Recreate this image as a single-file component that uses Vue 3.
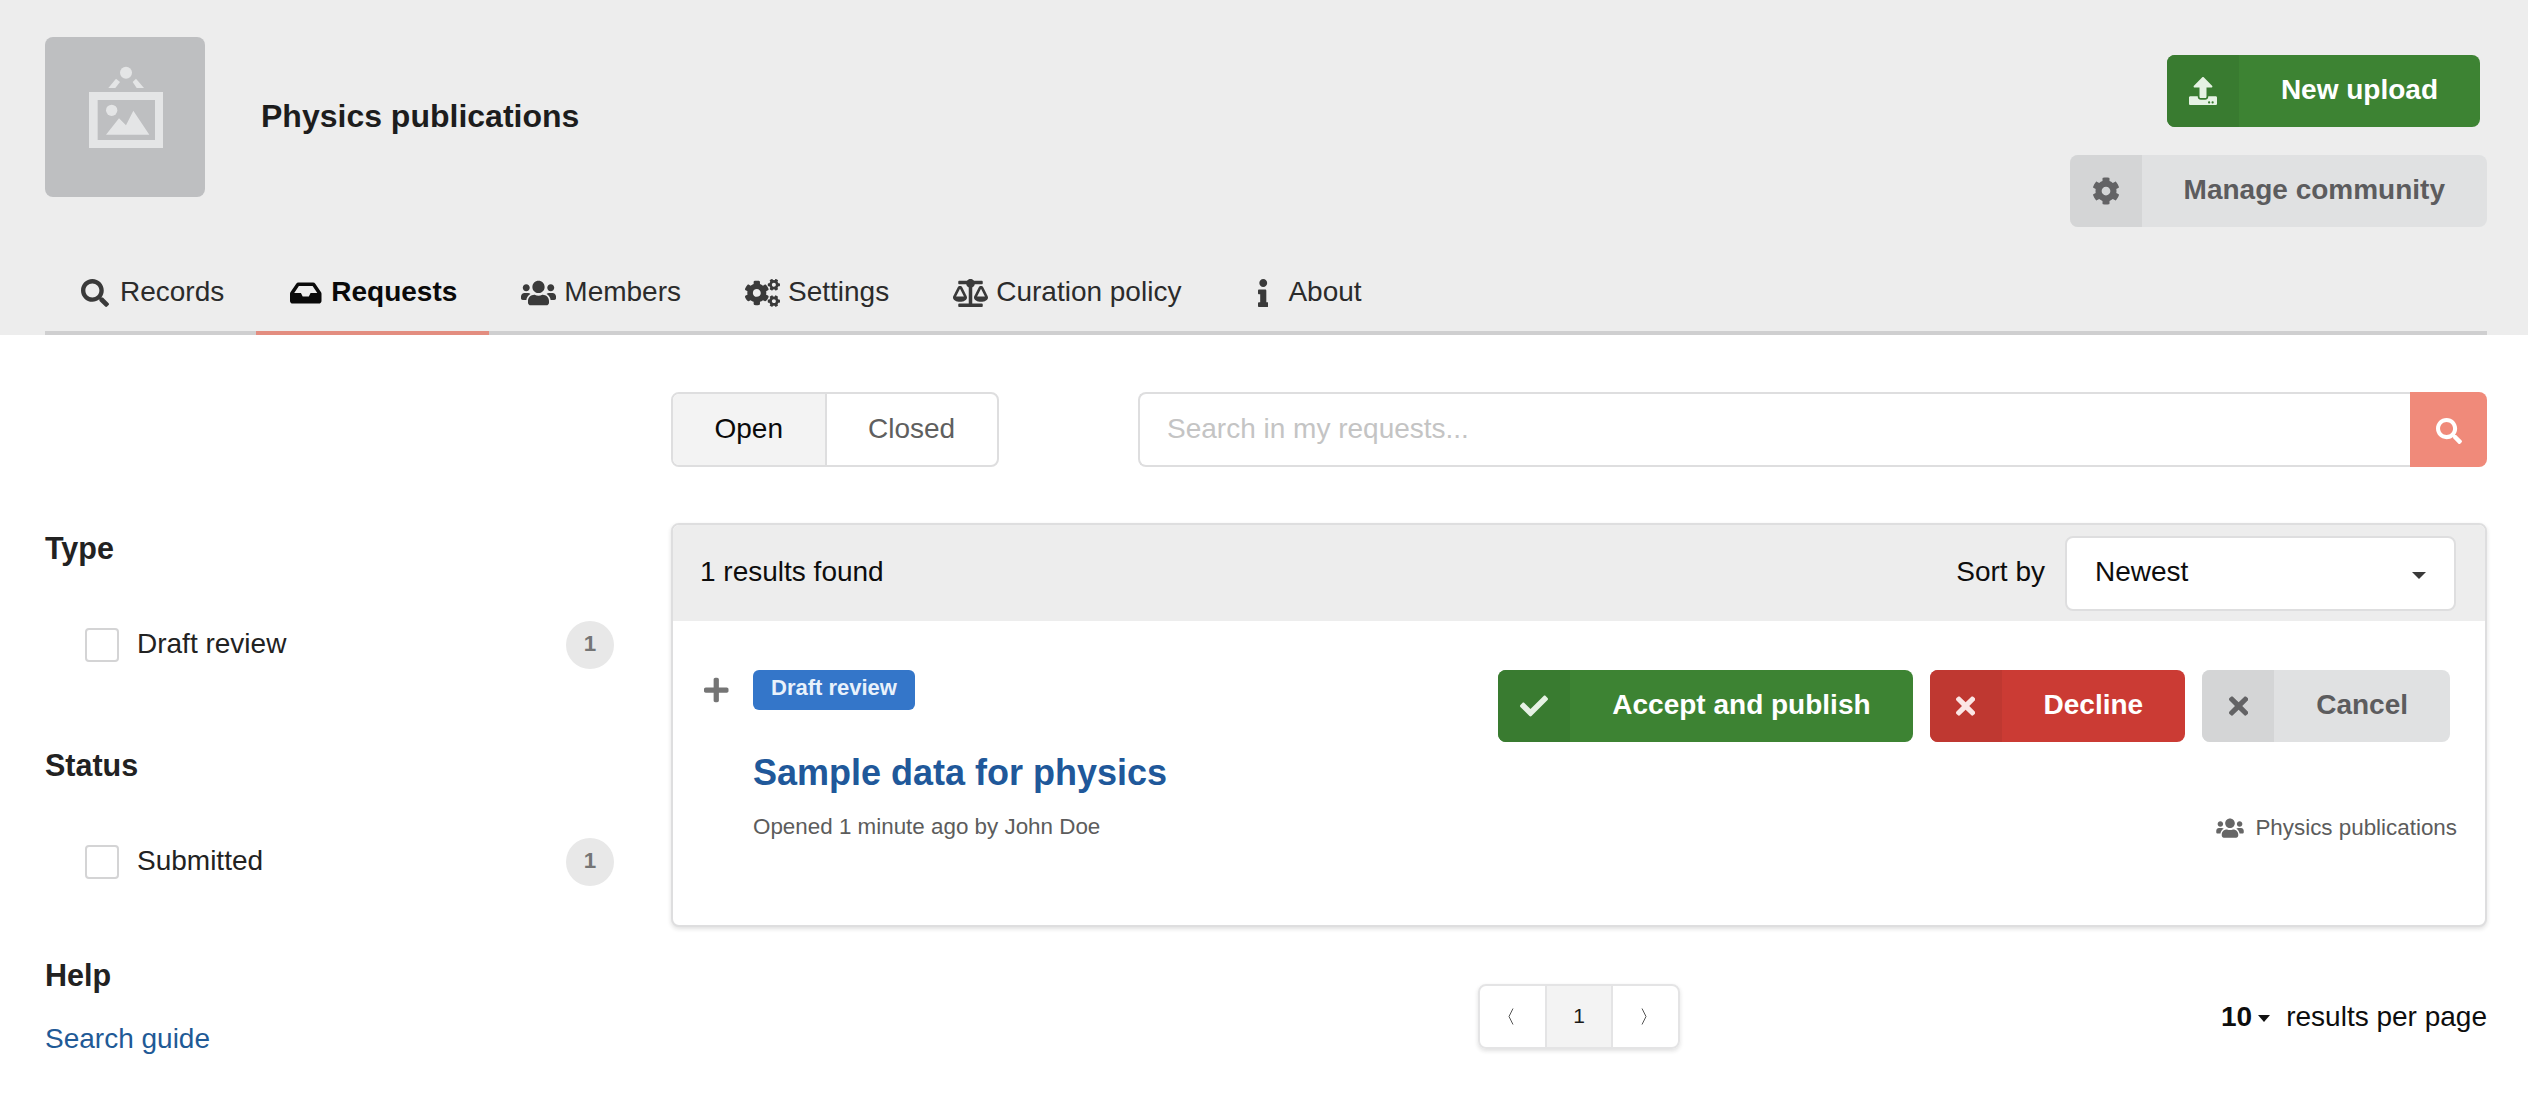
<script setup>
const P = {
  search: 'M505 442.7L405.3 343c-4.5-4.5-10.6-7-17-7H372c27.6-35.3 44-79.7 44-128C416 93.1 322.9 0 208 0S0 93.1 0 208s93.1 208 208 208c48.3 0 92.7-16.4 128-44v16.3c0 6.4 2.5 12.5 7 17l99.7 99.7c9.4 9.4 24.6 9.4 33.9 0l28.3-28.3c9.4-9.4 9.4-24.6.1-34zM208 336c-70.7 0-128-57.2-128-128 0-70.7 57.2-128 128-128 70.7 0 128 57.2 128 128 0 70.7-57.2 128-128 128z',
  inbox: 'M567.938 243.908L462.25 85.374A48.003 48.003 0 0 0 422.311 64H153.689a48 48 0 0 0-39.938 21.374L8.062 243.908A47.994 47.994 0 0 0 0 270.533V400c0 26.51 21.49 48 48 48h480c26.51 0 48-21.49 48-48V270.533a47.994 47.994 0 0 0-8.062-26.625zM162.252 128h251.497l85.333 128H376l-32 64H232l-32-64H76.918l85.334-128z',
  users: 'M96 224c35.3 0 64-28.7 64-64s-28.7-64-64-64-64 28.7-64 64 28.7 64 64 64zm448 0c35.3 0 64-28.7 64-64s-28.7-64-64-64-64 28.7-64 64 28.7 64 64 64zm32 32h-64c-17.6 0-33.5 7.1-45.1 18.6 40.3 22.1 68.9 62 75.1 109.4h66c17.7 0 32-14.3 32-32v-32c0-35.3-28.7-64-64-64zm-256 0c61.9 0 112-50.1 112-112S381.9 32 320 32 208 82.1 208 144s50.1 112 112 112zm76.8 32h-8.3c-20.8 10-43.9 16-68.5 16s-47.6-6-68.5-16h-8.3C179.6 288 128 339.6 128 403.2V432c0 26.5 21.5 48 48 48h288c26.5 0 48-21.5 48-48v-28.8c0-63.6-51.6-115.2-115.2-115.2zm-223.7-13.4C161.5 263.1 145.6 256 128 256H64c-35.3 0-64 28.7-64 64v32c0 17.7 14.3 32 32 32h65.9c6.3-47.4 34.9-87.3 75.2-109.4z',
  cogs: 'M512.1 191l-8.2 14.3c-3 5.3-9.4 7.5-15.1 5.4-11.8-4.4-22.6-10.7-32.1-18.6-4.6-3.8-5.8-10.5-2.8-15.7l8.2-14.3c-6.9-8-12.3-17.3-15.9-27.4h-16.5c-6 0-11.2-4.3-12.2-10.3-2-12-2.1-24.6 0-37.1 1-6 6.2-10.4 12.2-10.4h16.5c3.6-10.1 9-19.4 15.9-27.4l-8.2-14.3c-3-5.2-1.9-11.9 2.8-15.7 9.5-7.9 20.4-14.2 32.1-18.6 5.7-2.1 12.1.1 15.1 5.4l8.2 14.3c10.5-1.9 21.2-1.9 31.7 0L552 6.3c3-5.3 9.4-7.5 15.1-5.4 11.8 4.4 22.6 10.7 32.1 18.6 4.6 3.8 5.8 10.5 2.8 15.7l-8.2 14.3c6.9 8 12.3 17.3 15.9 27.4h16.5c6 0 11.2 4.3 12.2 10.3 2 12 2.1 24.6 0 37.1-1 6-6.2 10.4-12.2 10.4h-16.5c-3.6 10.1-9 19.4-15.9 27.4l8.2 14.3c3 5.2 1.9 11.9-2.8 15.7-9.5 7.9-20.4 14.2-32.1 18.6-5.7 2.1-12.1-.1-15.1-5.4l-8.2-14.3c-10.4 1.9-21.2 1.9-31.7 0zm-10.5-58.8c38.5 29.6 82.4-14.3 52.8-52.8-38.5-29.7-82.4 14.3-52.8 52.8zM386.3 286.1l33.7 16.8c10.1 5.8 14.5 18.1 10.5 29.1-8.9 24.2-26.4 46.4-42.6 65.8-7.4 8.9-20.2 11.1-30.3 5.3l-29.1-16.8c-16 13.7-34.6 24.6-54.9 31.7v33.6c0 11.6-8.3 21.6-19.7 23.6-24.6 4.2-50.4 4.4-75.9 0-11.5-2-20-11.9-20-23.6V418c-20.3-7.2-38.9-18-54.9-31.7L74 403c-10 5.8-22.9 3.6-30.3-5.3-16.2-19.4-33.3-41.6-42.2-65.7-4-10.9.4-23.2 10.5-29.1l33.3-16.8c-3.9-20.9-3.9-42.4 0-63.4L12 205.8c-10.1-5.8-14.6-18.1-10.5-29 8.9-24.2 26-46.4 42.2-65.8 7.4-8.9 20.2-11.1 30.3-5.3l29.1 16.8c16-13.7 34.6-24.6 54.9-31.7V57.1c0-11.5 8.2-21.5 19.6-23.5 24.6-4.2 50.5-4.4 76-.1 11.5 2 20 11.9 20 23.6v33.6c20.3 7.2 38.9 18 54.9 31.7l29.1-16.8c10-5.8 22.9-3.6 30.3 5.3 16.2 19.4 33.2 41.6 42.1 65.8 4 10.9.1 23.2-10 29.1l-33.7 16.8c3.9 21 3.9 42.5 0 63.5zm-117.6 21.1c59.2-77-28.7-164.9-105.7-105.7-59.2 77 28.7 164.9 105.7 105.7zm243.4 182.7l-8.2 14.3c-3 5.3-9.4 7.5-15.1 5.4-11.8-4.4-22.6-10.7-32.1-18.6-4.6-3.8-5.8-10.5-2.8-15.7l8.2-14.3c-6.9-8-12.3-17.3-15.9-27.4h-16.5c-6 0-11.2-4.3-12.2-10.3-2-12-2.1-24.6 0-37.1 1-6 6.2-10.4 12.2-10.4h16.5c3.6-10.1 9-19.4 15.9-27.4l-8.2-14.3c-3-5.2-1.9-11.9 2.8-15.7 9.5-7.9 20.4-14.2 32.1-18.6 5.7-2.1 12.1.1 15.1 5.4l8.2 14.3c10.5-1.9 21.2-1.9 31.7 0l8.2-14.3c3-5.3 9.4-7.5 15.1-5.4 11.8 4.4 22.6 10.7 32.1 18.6 4.6 3.8 5.8 10.5 2.8 15.7l-8.2 14.3c6.9 8 12.3 17.3 15.9 27.4h16.5c6 0 11.2 4.3 12.2 10.3 2 12 2.1 24.6 0 37.1-1 6-6.2 10.4-12.2 10.4h-16.5c-3.6 10.1-9 19.4-15.9 27.4l8.2 14.3c3 5.2 1.9 11.9-2.8 15.7-9.5 7.9-20.4 14.2-32.1 18.6-5.7 2.1-12.1-.1-15.1-5.4l-8.2-14.3c-10.4 1.9-21.2 1.9-31.7 0zM501.6 431c38.5 29.6 82.4-14.3 52.8-52.8-38.5-29.6-82.4 14.3-52.8 52.8z',
  cog: 'M487.4 315.7l-42.6-24.6c4.3-23.2 4.3-47 0-70.2l42.6-24.6c4.9-2.8 7.1-8.6 5.5-14-11.1-35.6-30-67.8-54.7-94.6-3.8-4.1-10-5.1-14.8-2.3L380.8 110c-17.9-15.4-38.5-27.3-60.8-35.1V25.8c0-5.6-3.9-10.5-9.4-11.7-36.7-8.2-74.3-7.8-109.2 0-5.5 1.2-9.4 6.1-9.4 11.7V75c-22.2 7.9-42.8 19.8-60.8 35.1L88.7 85.5c-4.9-2.8-11-1.9-14.8 2.3-24.7 26.7-43.6 58.9-54.7 94.6-1.7 5.4.6 11.2 5.5 14L67.3 221c-4.3 23.2-4.3 47 0 70.2l-42.6 24.6c-4.9 2.8-7.1 8.6-5.5 14 11.1 35.6 30 67.8 54.7 94.6 3.8 4.1 10 5.1 14.8 2.3l42.6-24.6c17.9 15.4 38.5 27.3 60.8 35.1v49.2c0 5.6 3.9 10.5 9.4 11.7 36.7 8.2 74.3 7.8 109.2 0 5.5-1.2 9.4-6.1 9.4-11.7v-49.2c22.2-7.9 42.8-19.8 60.8-35.1l42.6 24.6c4.9 2.8 11 1.9 14.8-2.3 24.7-26.7 43.6-58.9 54.7-94.6 1.5-5.5-.7-11.3-5.6-14.1zM256 336c-44.1 0-80-35.9-80-80s35.9-80 80-80 80 35.9 80 80-35.9 80-80 80z',
  scale: 'M256 336h-.02c0-16.18 1.34-8.73-85.05-181.51-17.65-35.29-68.19-35.36-85.87 0C-2.06 328.75.02 320.33.02 336H0c0 44.18 57.31 80 128 80s128-35.82 128-80zM128 176l72 144H56l72-144zm511.98 160c0-16.18 1.34-8.73-85.05-181.51-17.65-35.29-68.19-35.36-85.87 0-87.12 174.26-85.04 165.84-85.04 181.51H384c0 44.18 57.31 80 128 80s128-35.82 128-80h-.02zM440 320l72-144 72 144H440zm88 128H352V153.25c23.51-10.29 41.16-31.48 46.39-57.25H528c8.84 0 16-7.16 16-16V48c0-8.84-7.16-16-16-16H383.64C369.04 12.68 346.09 0 320 0s-49.04 12.68-63.64 32H112c-8.84 0-16 7.16-16 16v32c0 8.84 7.16 16 16 16h129.61c5.23 25.76 22.87 46.96 46.39 57.25V448H112c-8.84 0-16 7.16-16 16v32c0 8.84 7.16 16 16 16h416c8.84 0 16-7.16 16-16v-32c0-8.84-7.16-16-16-16z',
  info: 'M20 424.229h20V279.771H20c-11.046 0-20-8.954-20-20V212c0-11.046 8.954-20 20-20h112c11.046 0 20 8.954 20 20v212.229h20c11.046 0 20 8.954 20 20V492c0 11.046-8.954 20-20 20H20c-11.046 0-20-8.954-20-20v-47.771c0-11.046 8.954-20 20-20zM96 0C56.235 0 24 32.235 24 72s32.235 72 72 72 72-32.235 72-72S135.764 0 96 0z',
  check: 'M173.898 439.404l-166.4-166.4c-9.997-9.997-9.997-26.206 0-36.204l36.203-36.204c9.997-10.998 26.207-9.998 36.204 0L192 312.69 432.095 72.596c9.997-9.997 26.207-9.997 36.204 0l36.203 36.204c9.997 9.997 9.997 26.206 0 36.204l-294.4 294.401c-9.998 9.997-26.207 9.997-36.204-.001z',
  times: 'M242.72 256l100.07-100.07c12.28-12.28 12.28-32.19 0-44.48l-22.24-22.24c-12.28-12.28-32.19-12.28-44.48 0L176 189.28 75.93 89.21c-12.28-12.28-32.19-12.28-44.48 0L9.21 111.45c-12.28 12.28-12.28 32.19 0 44.48L109.28 256 9.21 356.07c-12.28 12.28-12.28 32.19 0 44.48l22.24 22.24c12.28 12.28 32.2 12.28 44.48 0L176 322.72l100.07 100.07c12.28 12.28 32.2 12.28 44.48 0l22.24-22.24c12.28-12.28 12.28-32.19 0-44.48L242.72 256z',
  plus: 'M416 208H272V64c0-17.67-14.33-32-32-32h-32c-17.67 0-32 14.33-32 32v144H32c-17.67 0-32 14.33-32 32v32c0 17.67 14.33 32 32 32h144v144c0 17.67 14.33 32 32 32h32c17.67 0 32-14.33 32-32V304h144c17.67 0 32-14.33 32-32v-32c0-17.67-14.33-32-32-32z',
  upload: 'M296 384h-80c-13.3 0-24-10.7-24-24V192h-87.7c-17.8 0-26.7-21.5-14.1-34.1L242.3 5.7c7.5-7.5 19.8-7.5 27.3 0l152.2 152.2c12.6 12.6 3.7 34.1-14.1 34.1H320v168c0 13.3-10.7 24-24 24zm216-8v112c0 13.3-10.7 24-24 24H24c-13.3 0-24-10.7-24-24V376c0-13.3 10.7-24 24-24h136v8c0 30.9 25.1 56 56 56h80c30.9 0 56-25.1 56-56v-8h136c13.3 0 24 10.7 24 24zm-124 88c0-11-9-20-20-20s-20 9-20 20 9 20 20 20 20-9 20-20zm64 0c0-11-9-20-20-20s-20 9-20 20 9 20 20 20 20-9 20-20z'
}
const tabs = [
  { label: 'Records', d: P.search, w: 512 },
  { label: 'Requests', d: P.inbox, w: 576, active: true },
  { label: 'Members', d: P.users, w: 640 },
  { label: 'Settings', d: P.cogs, w: 640 },
  { label: 'Curation policy', d: P.scale, w: 640 },
  { label: 'About', d: P.info, w: 192 }
]
const facets = [
  { title: 'Type', item: 'Draft review' },
  { title: 'Status', item: 'Submitted' }
]
const actions = [
  { label: 'Accept and publish', d: P.check, w: 512, cls: 'green' },
  { label: 'Decline', d: P.times, w: 352, cls: 'red' },
  { label: 'Cancel', d: P.times, w: 352, cls: 'grey' }
]
</script>

<template>
  <div class="page">
    <header class="hdr">
      <div class="hdr-top">
        <div class="brand">
          <div class="avatar">
            <svg viewBox="45 51 480 480" width="160" height="160">
              <circle cx="288" cy="158" r="18" fill="#e4e5e6" />
              <polygon points="235,204 258,176 270,186 256,204" fill="#e4e5e6" />
              <polygon points="308,186 318,176 342,204 320,204" fill="#e4e5e6" />
              <path fill="#e4e5e6" fill-rule="evenodd" d="M177 216H399V384H177ZM203 240V360H375V240Z" />
              <circle cx="245" cy="271" r="17" fill="#e4e5e6" />
              <polygon points="228,344 267,295 288,316 310,272 358,344" fill="#e4e5e6" />
            </svg>
          </div>
          <h1 class="name">Physics publications</h1>
        </div>
        <div class="hdr-actions">
          <button class="btn green upload-btn">
            <span class="btn-ico"><svg viewBox="0 0 512 512" class="i28"><path :d="P.upload" /></svg></span>
            <span class="btn-txt">New upload</span>
          </button>
          <button class="btn grey">
            <span class="btn-ico"><svg viewBox="0 0 512 512" class="i28"><path :d="P.cog" /></svg></span>
            <span class="btn-txt">Manage community</span>
          </button>
        </div>
      </div>
      <nav class="tabs">
        <a v-for="t in tabs" :key="t.label" class="tab" :class="{ active: t.active }">
          <span class="tab-ico"><svg :viewBox="`0 0 ${t.w} 512`" class="i28"><path :d="t.d" /></svg></span>
          <span class="tab-txt">{{ t.label }}</span>
        </a>
      </nav>
    </header>

    <div class="content">
      <aside class="side">
        <section v-for="f in facets" :key="f.title" class="facet">
          <h2 class="side-h">{{ f.title }}</h2>
          <div class="facet-row">
            <span class="cb"></span>
            <span class="facet-label">{{ f.item }}</span>
            <span class="count">1</span>
          </div>
        </section>
        <section class="help">
          <h2 class="side-h">Help</h2>
          <a class="guide">Search guide</a>
        </section>
      </aside>

      <main class="main">
        <div class="filters">
          <div class="toggle">
            <span class="tg on">Open</span>
            <span class="tg">Closed</span>
          </div>
          <div class="searchbox">
            <input class="search-input" placeholder="Search in my requests..." />
            <span class="search-btn"><svg viewBox="0 0 512 512" class="i26"><path :d="P.search" /></svg></span>
          </div>
        </div>

        <div class="card">
          <div class="card-head">
            <span>1 results found</span>
            <div class="sort">
              <span>Sort by</span>
              <div class="dropdown">
                <span>Newest</span>
                <i class="caret"></i>
              </div>
            </div>
          </div>
          <div class="item">
            <svg viewBox="0 0 448 512" class="plus"><path :d="P.plus" /></svg>
            <div class="info">
              <span class="label">Draft review</span>
              <a class="title">Sample data for physics</a>
              <div class="meta">Opened 1 minute ago by John Doe</div>
            </div>
            <div class="right">
              <div class="actions">
                <button v-for="a in actions" :key="a.label" class="btn" :class="a.cls">
                  <span class="btn-ico"><svg :viewBox="`0 0 ${a.w} 512`" class="i28"><path :d="a.d" /></svg></span>
                  <span class="btn-txt">{{ a.label }}</span>
                </button>
              </div>
              <div class="community">
                <svg viewBox="0 0 640 512" class="comm-ico"><path :d="P.users" /></svg>
                <span>Physics publications</span>
              </div>
            </div>
          </div>
        </div>

        <div class="foot">
          <span></span>
          <div class="pager">
            <span class="pg prev"><svg width="6" height="17" viewBox="0 0 6 17"><path d="M5 .5 1 8.5l4 8" fill="none" stroke="#555" stroke-width="1" /></svg></span>
            <span class="pg cur">1</span>
            <span class="pg next"><svg width="6" height="17" viewBox="0 0 6 17"><path d="M1 .5l4 8-4 8" fill="none" stroke="#555" stroke-width="1" /></svg></span>
          </div>
          <div class="per">
            <b>10</b><i class="caret dark"></i><span>results per page</span>
          </div>
        </div>
      </main>
    </div>
  </div>
</template>

<style>
html, body { background: #fff; }
</style>

<style scoped>
.page {
  font-family: "Liberation Sans", Arial, sans-serif;
  font-size: 28px;
  color: #1f1f1f;
  width: 2528px;
  height: 1112px;
  overflow: hidden;
}
.i28 { height: 28px; flex: none; fill: currentColor; display: block; }
.i26 { height: 26px; width: 26px; fill: #fff; display: block; }

.hdr {
  background: #ededed;
  height: 335px;
  box-sizing: border-box;
  padding: 37px 41px 0 45px;
  display: flex;
  flex-direction: column;
}
.hdr-top { display: flex; justify-content: space-between; height: 160px; flex: none; }
.brand { display: flex; align-items: center; gap: 56px; }
.avatar {
  width: 160px;
  height: 160px;
  border-radius: 8px;
  background: #bebfc1;
  overflow: hidden;
}
.avatar svg { display: block; }
.name { margin: 0; font-size: 32px; font-weight: 700; color: #1d1d1d; line-height: 44px; position: relative; top: -1px; }
.hdr-actions {
  display: flex;
  flex-direction: column;
  align-items: flex-end;
  gap: 28px;
  padding-top: 18px;
}
.upload-btn { margin-right: 7px; }

.btn {
  display: inline-flex;
  align-items: stretch;
  flex: none;
  height: 72px;
  padding: 0;
  border: 0;
  border-radius: 8px;
  overflow: hidden;
  font: 700 28px/1 "Liberation Sans", Arial, sans-serif;
}
.btn-ico {
  width: 72px;
  flex: none;
  display: flex;
  align-items: center;
  justify-content: center;
}
.btn-txt { display: flex; align-items: center; padding: 0 42px; position: relative; top: -1px; }
.green { background: #3d8333; color: #fff; }
.green .btn-ico { background: #397b30; color: #e6f2e4; }
.red { background: #cb3b34; color: #fff; }
.red .btn-ico { background: #bf3831; color: #fbe6e5; }
.grey { background: #e0e1e2; color: #5c5c5e; }
.grey .btn-ico { background: #d4d5d6; color: #636365; }

.tabs {
  margin-top: auto;
  display: flex;
  height: 79px;
  box-sizing: border-box;
  border-bottom: 4px solid #cfcfd0;
}
.tab {
  display: flex;
  align-items: center;
  padding: 0 32px 2px;
  height: 79px;
  color: #2b2b2b;
  line-height: 36px;
  box-sizing: border-box;
  border-bottom: 4px solid transparent;
}
.tab-txt { position: relative; top: -1px; }
.tab.active { font-weight: 700; color: #0a0a0a; border-bottom-color: #e38d80; }
.tab-ico { width: 33px; height: 28px; display: flex; justify-content: center; margin: 0 9px 0 1px; flex: none; color: #3a3a3a; }
.tab.active .tab-ico { color: #0a0a0a; }

.content { display: flex; padding: 0 41px 0 45px; }
.side { width: 569px; flex: none; margin-right: 57px; box-sizing: border-box; padding-top: 195px; }
.facet { margin-bottom: 78px; }
.facet:nth-of-type(2) { margin-bottom: 71px; }
.side-h { margin: 0; font-size: 30.5px; font-weight: 700; line-height: 36px; color: #222; }
.facet-row { display: flex; align-items: center; height: 48px; margin-top: 55px; padding-left: 40px; }
.cb {
  width: 34px;
  height: 34px;
  box-sizing: border-box;
  border: 2px solid #d4d4d5;
  border-radius: 4px;
  background: #fff;
  margin-right: 18px;
}
.facet-label { flex: 1; line-height: 36px; position: relative; top: -1px; color: #222; }
.count {
  width: 48px;
  height: 48px;
  border-radius: 50%;
  background: #e8e8e8;
  color: #757575;
  font-size: 22.4px;
  font-weight: 700;
  display: flex;
  align-items: center;
  justify-content: center;
  padding-bottom: 2px;
  box-sizing: border-box;
}
.guide { display: block; margin-top: 28px; line-height: 36px; color: #1f5a96; }

.main { flex: 1; min-width: 0; padding-top: 57px; }
.filters { display: flex; justify-content: space-between; height: 75px; }
.toggle {
  display: flex;
  box-sizing: border-box;
  border: 2px solid #dededf;
  border-radius: 8px;
  overflow: hidden;
}
.tg { display: flex; align-items: center; padding: 0 41.5px 2px; color: #5f5f5f; }
.tg.on { background: #f3f3f3; color: #0a0a0a; border-right: 2px solid #dededf; }
.searchbox { display: flex; width: 1349px; }
.search-input {
  flex: 1;
  min-width: 0;
  box-sizing: border-box;
  height: 75px;
  border: 2px solid #dededf;
  border-right: 0;
  border-radius: 8px 0 0 8px;
  padding: 0 26px 2px 27px;
  font: 28px "Liberation Sans", Arial, sans-serif;
  outline: none;
  background: #fff;
}
.search-input::placeholder { color: #c4c4c4; opacity: 1; }
.search-btn {
  width: 77px;
  background: #f08a7a;
  border-radius: 0 8px 8px 0;
  display: flex;
  align-items: center;
  justify-content: center;
  padding-top: 3px;
  box-sizing: border-box;
}

.card {
  margin-top: 56px;
  height: 404px;
  box-sizing: border-box;
  border: 2px solid #dededf;
  border-radius: 8px;
  box-shadow: 0 2px 4px rgba(34, 36, 38, .14);
  background: #fff;
}
.card-head {
  background: #ededed;
  height: 96px;
  display: flex;
  align-items: center;
  justify-content: space-between;
  padding: 0 29px 2px 27px;
  box-sizing: content-box;
  height: 94px;
  border-radius: 6px 6px 0 0;
  color: #0d0d0d;
}
.sort { display: flex; align-items: center; gap: 20px; margin-top: 2px; }
.sort > span { position: relative; top: -1px; }
.dropdown {
  width: 391px;
  height: 75px;
  box-sizing: border-box;
  background: #fff;
  border: 2px solid #dededf;
  border-radius: 8px;
  display: flex;
  align-items: center;
  justify-content: space-between;
  padding: 0 28px 2px 28px;
}
.caret {
  width: 0;
  height: 0;
  border-left: 7px solid transparent;
  border-right: 7px solid transparent;
  border-top: 7px solid #3a3a3a;
  margin-top: 6px;
}
.item { display: flex; padding: 49px 28px 0 31px; }
.plus { width: 24.5px; height: 28px; margin: 6px 24.5px 0 0; fill: #757575; flex: none; display: block; }
.info { flex: 1; min-width: 0; }
.label {
  display: inline-block;
  height: 40px;
  line-height: 36px;
  padding: 0 18px;
  border-radius: 6px;
  background: #3476c9;
  color: #e8f1fb;
  font-size: 22px;
  font-weight: 700;
  vertical-align: top;
}
.title {
  display: block;
  margin-top: 41px;
  font-size: 36px;
  font-weight: 700;
  line-height: 44px;
  color: #20589a;
}
.meta { margin-top: 17px; font-size: 22.4px; line-height: 30px; color: #5c5c5c; }
.right { display: flex; flex-direction: column; align-items: flex-end; }
.actions { display: flex; gap: 17px; margin-right: 7px; }
.community {
  display: flex;
  align-items: center;
  gap: 11px;
  margin-top: 71px;
  font-size: 22.4px;
  line-height: 30px;
  color: #5c5c5c;
}
.comm-ico { height: 22px; width: 28px; fill: #666; display: block; }

.foot {
  margin-top: 57px;
  display: grid;
  grid-template-columns: 1fr auto 1fr;
  align-items: center;
}
.pager {
  display: flex;
  height: 65px;
  box-sizing: border-box;
  border: 2px solid #e4e4e5;
  border-radius: 8px;
  box-shadow: 0 2px 4px rgba(34, 36, 38, .14);
  overflow: hidden;
}
.pg {
  width: 65px;
  display: flex;
  align-items: center;
  justify-content: center;
  font-size: 21px;
  color: #1a1a1a;
}
.pg.prev { padding-right: 4px; box-sizing: border-box; }
.pg.next { padding-right: 4px; box-sizing: border-box; }
.pg.cur { background: #f3f3f3; border-left: 2px solid #e4e4e5; border-right: 2px solid #e4e4e5; width: 64px; padding-bottom: 2px; }
.per { display: flex; align-items: center; justify-content: flex-end; color: #0d0d0d; }
.per b { font-weight: 700; }
.caret.dark { border-top-color: #111; margin: 4px 16px 0 6px; border-left-width: 6.5px; border-right-width: 6.5px; }
</style>
